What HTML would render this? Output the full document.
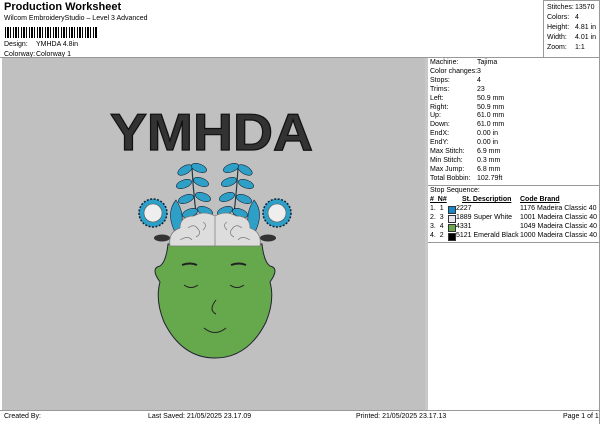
<!DOCTYPE html><html><head><style>
body{margin:0;width:600px;height:424px;background:#fff;font-family:"Liberation Sans",sans-serif;color:#000;position:relative;overflow:hidden}
.a{position:absolute;white-space:nowrap}
.s{font-size:7px}
</style></head><body>
<div class="a" style="left:4px;top:1px;font-size:11px;font-weight:bold">Production Worksheet</div>
<div class="a s" style="left:4px;top:15px">Wilcom EmbroideryStudio – Level 3 Advanced</div>
<div class="a" style="left:5px;top:27px;width:93px;height:11px;background:repeating-linear-gradient(90deg,#000 0 1px,#fff 1px 2px,#000 2px 4px,#fff 4px 5px,#000 5px 6px,#fff 6px 8px)"></div>
<div class="a s" style="left:4px;top:41px">Design:</div><div class="a s" style="left:36px;top:41px">YMHDA 4.8in</div>
<div class="a s" style="left:4px;top:51px">Colorway:</div><div class="a s" style="left:36px;top:51px">Colorway 1</div>
<div class="a" style="left:543px;top:0;width:1px;height:58px;background:#999"></div>
<div class="a" style="left:543px;top:0;width:56px;height:1px;background:#999"></div>
<div class="a s" style="left:547px;top:3px;line-height:10px">Stitches:<br>Colors:<br>Height:<br>Width:<br>Zoom:</div>
<div class="a s" style="left:575px;top:3px;line-height:10px">13570<br>4<br>4.81 in<br>4.01 in<br>1:1</div>
<div class="a" style="left:0;top:57px;width:600px;height:1px;background:#999"></div>
<div class="a" style="left:2px;top:58px;width:423px;height:352px;background:#c0c0c0"></div>
<div class="a" style="left:425px;top:58px;width:3px;height:352px;background:#c8c8c8"></div>
<div class="a" style="left:599px;top:0;width:1px;height:424px;background:#999"></div>
<div class="a s" style="left:430px;top:59px;line-height:8.9px">Machine:<br>Color changes:<br>Stops:<br>Trims:<br>Left:<br>Right:<br>Up:<br>Down:<br>EndX:<br>EndY:<br>Max Stitch:<br>Min Stitch:<br>Max Jump:<br>Total Bobbin:</div>
<div class="a s" style="left:477px;top:59px;line-height:8.9px">Tajima<br>3<br>4<br>23<br>50.9 mm<br>50.9 mm<br>61.0 mm<br>61.0 mm<br>0.00 in<br>0.00 in<br>6.9 mm<br>0.3 mm<br>6.8 mm<br>102.79ft</div>
<div class="a" style="left:428px;top:185px;width:171px;height:1px;background:#999"></div>
<div class="a s" style="left:430px;top:187px">Stop Sequence:</div>
<div class="a s" style="left:430px;top:196px;font-weight:bold;text-decoration:underline">#&nbsp; N#</div>
<div class="a s" style="left:462px;top:196px;font-weight:bold;text-decoration:underline">St. Description</div>
<div class="a s" style="left:520px;top:196px;font-weight:bold;text-decoration:underline">Code Brand</div>
<div class="a s" style="left:430px;top:205px;line-height:8.9px">1.&nbsp; 1<br>2.&nbsp; 3<br>3.&nbsp; 4<br>4.&nbsp; 2</div>
<div class="a" style="left:448px;top:206px;width:6px;height:6px;background:#1a88c8;border:.5px solid #333"></div>
<div class="a" style="left:448px;top:215px;width:6px;height:6px;background:#e8e8f0;border:.5px solid #333"></div>
<div class="a" style="left:448px;top:224px;width:6px;height:6px;background:#6aa84f;border:.5px solid #333"></div>
<div class="a" style="left:448px;top:233px;width:6px;height:6px;background:#000;border:.5px solid #333"></div>
<div class="a s" style="left:456px;top:205px;line-height:8.9px">2227<br>1889 Super White<br>4331<br>5121 Emerald Black</div>
<div class="a s" style="left:520px;top:205px;line-height:8.9px">1176 Madeira Classic 40<br>1001 Madeira Classic 40<br>1049 Madeira Classic 40<br>1000 Madeira Classic 40</div>
<div class="a" style="left:428px;top:242px;width:171px;height:1px;background:#999"></div>
<div class="a" style="left:0;top:410px;width:600px;height:1px;background:#999"></div>
<div class="a s" style="left:4px;top:413px">Created By:</div>
<div class="a s" style="left:148px;top:413px">Last Saved: 21/05/2025 23.17.09</div>
<div class="a s" style="left:356px;top:413px">Printed: 21/05/2025 23.17.13</div>
<div class="a s" style="left:563px;top:413px">Page 1 of 1</div>
<svg class="a" style="left:0;top:0" width="600" height="424">
<text x="110" y="150" textLength="203" lengthAdjust="spacingAndGlyphs" font-family="Liberation Sans" font-weight="bold" font-size="52" fill="#333" stroke="#111" stroke-width="1.2">YMHDA</text>
<g stroke="#1a3a44" stroke-width="1.2" fill="none">
<path d="M200 240 Q194 205 192 168"/><path d="M230 240 Q236 205 238 168"/>
</g>
<g fill="#2ea0c8" stroke="#123" stroke-width=".6">
<ellipse cx="185" cy="170" rx="8" ry="4" transform="rotate(-30 185 170)"/><ellipse cx="199" cy="168" rx="8" ry="4" transform="rotate(20 199 168)"/>
<ellipse cx="184" cy="184" rx="8" ry="4" transform="rotate(-20 184 184)"/><ellipse cx="201" cy="182" rx="8" ry="4" transform="rotate(20 201 182)"/>
<ellipse cx="186" cy="199" rx="8" ry="4" transform="rotate(-20 186 199)"/><ellipse cx="203" cy="197" rx="8" ry="4" transform="rotate(20 203 197)"/>
<ellipse cx="190" cy="213" rx="8" ry="4" transform="rotate(-20 190 213)"/><ellipse cx="205" cy="211" rx="8" ry="4" transform="rotate(20 205 211)"/>
<ellipse cx="245" cy="170" rx="8" ry="4" transform="rotate(30 245 170)"/><ellipse cx="231" cy="168" rx="8" ry="4" transform="rotate(-20 231 168)"/>
<ellipse cx="246" cy="184" rx="8" ry="4" transform="rotate(20 246 184)"/><ellipse cx="229" cy="182" rx="8" ry="4" transform="rotate(-20 229 182)"/>
<ellipse cx="244" cy="199" rx="8" ry="4" transform="rotate(20 244 199)"/><ellipse cx="227" cy="197" rx="8" ry="4" transform="rotate(-20 227 197)"/>
<ellipse cx="240" cy="213" rx="8" ry="4" transform="rotate(20 240 213)"/><ellipse cx="225" cy="211" rx="8" ry="4" transform="rotate(-20 225 211)"/>
<path d="M174 230 Q166 212 176 200 Q186 214 180 232Z"/><path d="M256 230 Q264 212 254 200 Q244 214 250 232Z"/>
<circle cx="153" cy="213" r="14" stroke-dasharray="2 1.5" stroke-width="1.5"/><circle cx="277" cy="213" r="14" stroke-dasharray="2 1.5" stroke-width="1.5"/>
</g>
<circle cx="153" cy="213" r="9" fill="#eee" stroke="#555" stroke-width=".6"/><circle cx="277" cy="213" r="9" fill="#eee" stroke="#555" stroke-width=".6"/>
<ellipse cx="162" cy="238" rx="8" ry="3.5" fill="#333"/><ellipse cx="268" cy="238" rx="8" ry="3.5" fill="#333"/>
<path d="M160 282 Q150 268 160 266 Q166 262 168 244 L262 244 Q264 262 270 266 Q280 268 270 282 Q275 300 266 322 Q248 358 215 358 Q182 358 164 322 Q155 300 160 282Z" fill="#66a84c" stroke="#223" stroke-width="1"/>
<g fill="#ddd" stroke="#777" stroke-width=".7">
<path d="M170 246 Q168 232 180 228 Q180 216 194 216 Q204 210 215 216 Q226 210 236 216 Q250 216 250 228 Q262 232 260 246Z"/>
</g>
<path d="M215 216 V246 M188 228 q6 -5 10 1 q4 5 -2 8 M242 228 q-6 -5 -10 1 q-4 5 2 8 M180 240 q8 -5 12 0 M250 240 q-8 -5 -12 0 M203 222 q5 3 0 8 M227 222 q-5 3 0 8" stroke="#777" stroke-width=".7" fill="none"/>
<g stroke="#222" fill="none" stroke-width="1">
<path d="M182 265 q8 -3 15 0 M231 265 q8 -3 15 0" stroke-width="2"/>
<path d="M184 285 q7 5 14 0 M230 285 q7 5 14 0 M216 300 q-8 10 0 14 M204 328 q11 9 22 0"/>
</g>
</svg>
</body></html>
